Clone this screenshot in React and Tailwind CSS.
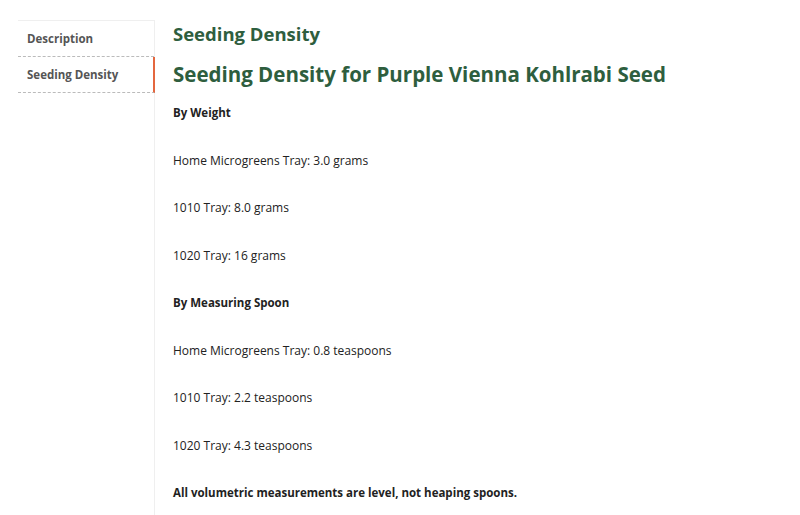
import React from 'react';

const tabs = ['Description', 'Seeding Density'];

const rows = [
  { text: 'By Weight', bold: true },
  { text: 'Home Microgreens Tray: 3.0 grams' },
  { text: '1010 Tray: 8.0 grams' },
  { text: '1020 Tray: 16 grams' },
  { text: 'By Measuring Spoon', bold: true },
  { text: 'Home Microgreens Tray: 0.8 teaspoons' },
  { text: '1010 Tray: 2.2 teaspoons' },
  { text: '1020 Tray: 4.3 teaspoons' },
  { text: 'All volumetric measurements are level, not heaping spoons.', bold: true },
];

export default function App() {
  return (
    <div className="w-[800px] h-[515px] overflow-hidden bg-white flex pt-5 pl-[18px]" style={{ fontFamily: '"Open Sans", "Noto Sans", sans-serif' }}>
      {/* tabs */}
      <div className="w-[137px] shrink-0 border-t border-r border-[#efefef] h-[600px]">
        {tabs.map((t, i) => (
          <div
            key={t}
            className={`h-9 flex items-center pl-[9px] text-[11.5px] font-bold text-[#555] border-b border-dashed border-[#bbb] ${i === 1 ? 'border-r-2 border-r-[#e4673f] -mr-px' : ''}`}
            style={i === 1 ? { borderRightStyle: 'solid' } : undefined}
          >
            {t}
          </div>
        ))}
      </div>

      {/* content */}
      <div className="pl-[18px]">
        <h2 className="text-[18.5px] leading-[28px] font-bold text-[#2e5e3e]">Seeding Density</h2>
        <h1 className="text-[20.5px] leading-[30px] font-bold text-[#2e5e3e] mt-[11px]">Seeding Density for Purple Vienna Kohlrabi Seed</h1>
        <div className="mt-[15px] text-[12px] text-[#222]">
          {rows.map((r, i) => (
            <p key={i} className={`leading-[18px] ${i > 0 ? 'mt-[29.5px]' : ''} ${r.bold ? 'font-bold text-[11.5px]' : ''}`}>
              {r.text}
            </p>
          ))}
        </div>
      </div>
    </div>
  );
}
